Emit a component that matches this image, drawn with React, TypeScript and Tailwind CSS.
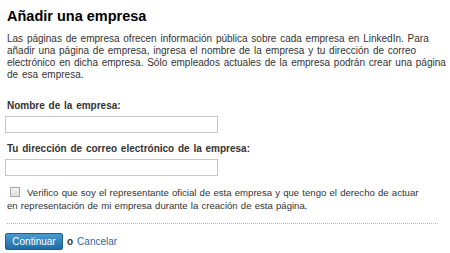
import React from "react";

const App = () => {
  return (
    <div className="w-[450px] h-[253px] bg-white px-[7px] pt-[6px] text-[#333] font-['Liberation_Sans',Arial,sans-serif] overflow-hidden">
      <h1 className="text-[14.5px] font-bold text-black leading-[20px]">Añadir una empresa</h1>
      <p className="mt-[7px] whitespace-nowrap text-[10px] leading-[12px] [word-spacing:1px]">
        Las páginas de empresa ofrecen información pública sobre cada empresa en LinkedIn. Para
        <br />
        añadir una página de empresa, ingresa el nombre de la empresa y tu dirección de correo
        <br />
        electrónico en dicha empresa. Sólo empleados actuales de la empresa podrán crear una página
        <br />
        de esa empresa.
      </p>
      <form className="mt-[19px] flex flex-col">
        <label className="text-[10px] font-bold leading-[12px] [word-spacing:1px]">Nombre de la empresa:</label>
        <input
          type="text"
          className="mt-[4px] -ml-[2px] w-[213px] h-[17px] border border-[#c8c8c8] bg-white outline-none"
        />
        <label className="mt-[10px] text-[10px] font-bold leading-[12px] [word-spacing:1px]">
          Tu dirección de correo electrónico de la empresa:
        </label>
        <input
          type="text"
          className="mt-[4px] -ml-[2px] w-[213px] h-[17px] border border-[#c8c8c8] bg-white outline-none"
        />
        <div className="mt-[10px] pl-[3px] whitespace-nowrap text-[9.6px] leading-[13px] [word-spacing:0.5px]">
          <span className="inline-block w-[10px] h-[10px] align-[-1px] border border-[#a8a8a8] bg-gradient-to-b from-[#f4f4f4] to-[#dcdcdc] mr-[7px]" />
          Verifico que soy el representante oficial de esta empresa y que tengo el derecho de actuar
          <br />
          <span className="-ml-[3px]">en representación de mi empresa durante la creación de esta página.</span>
        </div>
        <div className="mt-[11px] w-[431px] border-t border-dotted border-[#b8b8b8]" />
        <div className="mt-[9px] -ml-[2px] flex items-center gap-[4px]">
          <button
            type="button"
            className="h-[17px] w-[58px] rounded-[2px] border border-[#1d5f8f] bg-gradient-to-b from-[#4a9ad0] to-[#1f6ca4] text-white text-[10px] leading-[15px]"
          >
            Continuar
          </button>
          <span className="text-[10px] font-bold text-[#333]">o</span>
          <a href="#" className="text-[10px] text-[#2a6ca7]">Cancelar</a>
        </div>
      </form>
    </div>
  );
};

export default App;
